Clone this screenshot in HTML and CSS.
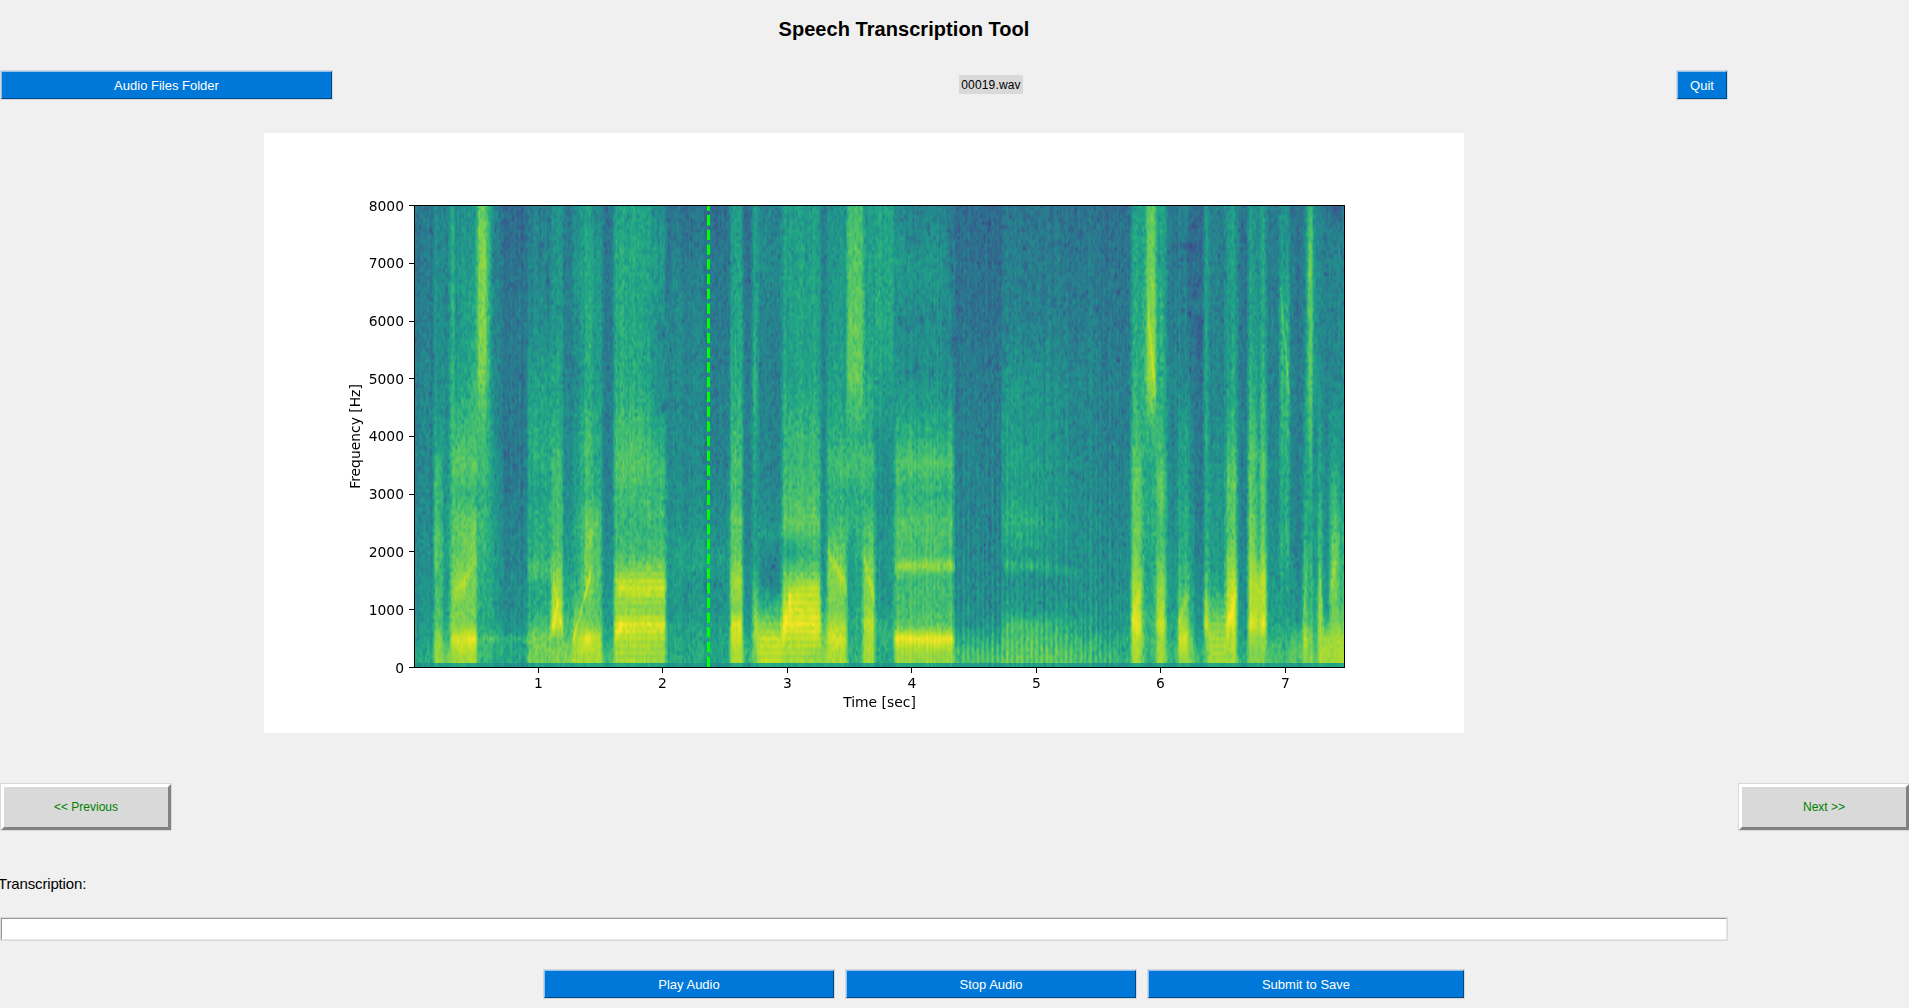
FILE: index.html
```html
<!DOCTYPE html>
<html lang="en">
<head>
<meta charset="utf-8">
<title>Speech Transcription Tool</title>
<link rel="stylesheet" href="styles.css">
</head>
<body>
<main class="app">
  <h1 class="title">Speech Transcription Tool</h1>
  <div class="toolbar">
    <button class="btn folder">Audio Files Folder</button>
    <span class="filename">00019.wav</span>
    <button class="btn quit">Quit</button>
  </div>
  <section class="figure">
    <canvas id="spec" class="spec" width="931" height="463"></canvas>
    <svg class="axes" width="1200" height="600" viewBox="0 0 1200 600">
      <line class="cursor" x1="444.5" y1="534" x2="444.5" y2="73"/>
      <rect class="frame" x="150.5" y="72.5" width="930" height="462"/>
      <path class="ticks" d="M145 534.5h5M145 476.5h5M145 418.5h5M145 361.5h5M145 303.5h5M145 245.5h5M145 188.5h5M145 130.5h5M145 72.5h5M274.5 535v5M398.5 535v5M523.5 535v5M647.5 535v5M772.5 535v5M896.5 535v5M1021.5 535v5"/>
      <g class="ylab">
        <text x="140" y="540">0</text><text x="140" y="482">1000</text><text x="140" y="424">2000</text>
        <text x="140" y="366">3000</text><text x="140" y="308">4000</text><text x="140" y="251">5000</text>
        <text x="140" y="193">6000</text><text x="140" y="135">7000</text><text x="140" y="78">8000</text>
      </g>
      <g class="xlab">
        <text x="274.5" y="555">1</text><text x="398.5" y="555">2</text><text x="523.5" y="555">3</text>
        <text x="648" y="555">4</text><text x="772.5" y="555">5</text><text x="896.5" y="555">6</text>
        <text x="1021.5" y="555">7</text><text x="615.5" y="574">Time [sec]</text>
        <text transform="translate(96 303.5) rotate(-90)">Frequency [Hz]</text>
      </g>
    </svg>
  </section>
  <div class="nav">
    <button class="step">&lt;&lt; Previous</button>
    <button class="step">Next &gt;&gt;</button>
  </div>
  <label class="label" for="entry">Transcription:</label>
  <input class="entry" id="entry" type="text">
  <div class="actions">
    <button class="btn">Play Audio</button>
    <button class="btn">Stop Audio</button>
    <button class="btn submit">Submit to Save</button>
  </div>
</main>
<script src="spectrogram.js"></script>
</body>
</html>
```
FILE: styles.css
```css
* { box-sizing: border-box; }
body {
  margin: 0;
  background: #f0f0f0;
  color: #000;
  font-family: "Liberation Sans", Arial, sans-serif;
  overflow: hidden;
}
.app { display: flex; flex-direction: column; width: 1910px; height: 1008px; }
.title {
  margin: 0;
  width: 1808px;
  height: 70px;
  padding-top: 17px;
  text-align: center;
  font-size: 20px;
  line-height: 24px;
  font-weight: bold;
  letter-spacing: 0.05px;
}
.toolbar { display: flex; align-items: flex-start; height: 63px; }
button { padding: 0; border-radius: 0; font-family: inherit; }
.btn {
  height: 28px;
  margin: 1px;
  padding-top: 1px;
  background: #0078d9;
  color: #fff;
  border: 1px solid;
  border-color: #8fc1f2 #004880 #004880 #8fc1f2;
  outline: 1px solid #d4d6d9;
  font-size: 13px;
  line-height: 24px;
}
.folder { width: 331px; }
.filename {
  width: 64px;
  height: 19px;
  margin: 5px 653px 0 626px;
  background: #d9d9d9;
  font-size: 12px;
  line-height: 20px;
  letter-spacing: 0.15px;
  text-align: center;
}
.quit { width: 50px; }
.figure {
  position: relative;
  width: 1200px;
  height: 600px;
  margin-left: 264px;
  padding: 72px 0 0 150px;
  background: #fff;
}
.spec { display: block; }
.axes { position: absolute; inset: 0; font: 13.89px "DejaVu Sans", sans-serif; }
.frame, .ticks { fill: none; stroke: #000; stroke-width: 1; }
.cursor { stroke: #0f0; stroke-width: 3; stroke-dasharray: 10.28 4.44; }
.ylab { text-anchor: end; }
.xlab { text-anchor: middle; }
.nav { display: flex; justify-content: space-between; margin-top: 50px; }
.step {
  width: 170px;
  height: 46px;
  margin: 1px;
  background: #d9d9d9;
  color: #008000;
  border: 3px solid;
  border-color: #fff #828282 #828282 #fff;
  outline: 1px solid #d9d9d9;
  font-size: 12px;
}
.label { margin: 43px 0 0 -2px; height: 20px; font-size: 15px; line-height: 20px; letter-spacing: -0.15px; }
.entry {
  width: 1726px;
  height: 22px;
  margin: 24px 1px 1px;
  padding: 0 2px;
  border: 1px solid;
  border-color: #999 #e6e6e6 #e6e6e6 #999;
  border-radius: 0;
  outline: 1px solid #d9d9d9;
  background: #fff;
}
.actions { display: grid; grid-template-columns: 292px 292px 318px; column-gap: 10px; margin: 28px 0 0 543px; }
```
FILE: spectrogram.js
```javascript
(function () {
  var W = 931, H = 463;
  var canvas = document.getElementById('spec');
  var ctx = canvas.getContext('2d');

  // Viridis control points
  var MAP = [[68,1,84],[72,36,117],[65,68,135],[53,95,141],[42,120,142],[33,145,140],
             [34,168,132],[68,191,112],[122,209,81],[189,223,38],[253,231,37]];
  // Frequencies (kHz) at which the levels of each span are given
  var F = [8, 7, 6, 5, 4, 3.5, 3, 2.5, 2, 1.5, 1, 0.75, 0.5, 0.2];
  // Spans: start, end (px), levels in percent from 8 kHz down to 200 Hz
  var S = [
    [0,20, '40 40 41 44 45 45 45 47 48 48 50 52 55 60'],
    [20,28,'46 49 51 50 57 68 68 71 76 70 72 76 85 85'],
    [28,36,'46 46 47 49 51 53 54 56 57 56 58 60 68 78'],
    [36,40,'62 65 64 66 70 72 70 72 74 80 80 84 90 84'],
    [40,52,'48 52 52 56 68 74 66 76 73 84 79 81 93 86'],
    [52,63,'52 56 59 64 70 76 66 78 79 80 78 81 98 87'],
    [63,75,'76 79 80 77 66 67 62 64 62 60 60 60 66 66'],
    [75,85,'46 44 45 46 50 52 53 54 54 55 55 56 63 60'],
    [85,113,'34 38 40 40 40 40 43 44 45 47 49 51 58 60'],
    [113,137,'42 45 47 56 60 60 56 61 62 58 61 68 80 77'],
    [137,149,'50 53 54 58 62 69 68 69 72 84 87 93 78 79'],
    [149,158,'40 40 42 44 46 46 48 48 52 56 62 66 73 80'],
    [158,168,'46 52 48 46 52 54 54 60 58 62 73 79 86 86'],
    [168,179,'57 60 61 60 70 70 66 77 76 80 77 80 96 87'],
    [179,188,'46 52 54 54 58 60 60 70 72 72 72 76 88 86'],
    [188,200,'38 40 40 41 42 43 44 45 46 50 54 55 58 70'],
    [200,236,'56 59 59 60 68 72 68 65 68 86 82 92 86 85'],
    [236,252,'48 54 50 48 60 67 66 66 70 86 82 92 85 84'],
    [252,290,'37 42 45 46 46 46 49 51 55 52 52 56 58 60'],
    [290,316,'35 39 41 42 43 44 46 48 52 50 52 54 58 58'],
    [316,329,'54 56 58 61 66 70 68 76 74 86 80 95 91 87'],
    [329,339,'35 38 40 42 44 43 44 45 46 49 50 53 60 66'],
    [339,344,'58 58 60 66 60 56 56 56 58 68 80 88 84 80'],
    [344,368,'43 47 44 43 44 44 46 50 50 52 66 80 90 89'],
    [368,407,'56 57 58 58 66 67 70 75 66 80 92 96 90 85'],
    [407,413,'39 39 40 41 43 44 45 45 46 50 58 68 76 82'],
    [413,433,'50 53 54 57 62 70 62 68 76 82 79 87 93 87'],
    [433,449,'68 73 75 76 63 69 60 63 61 58 60 62 62 66'],
    [449,461,'53 56 57 59 60 70 61 69 74 82 82 90 86 86'],
    [461,480,'57 59 60 56 50 49 48 51 52 52 54 61 63 60'],
    [480,540,'44 52 48 50 62 72 63 72 70 69 70 74 93 84'],
    [540,588,'35 37 38 41 43 44 44 45 46 47 49 51 62 71'],
    [588,632,'38 42 43 52 54 57 56 63 55 50 54 69 71 75'],
    [632,666,'37 41 42 48 49 50 50 52 50 49 53 62 67 73'],
    [666,700,'37 40 42 44 44 46 47 48 49 50 52 53 61 68'],
    [700,717,'35 38 39 41 42 43 44 45 47 49 51 53 59 61'],
    [717,728,'57 59 60 63 68 73 77 76 76 85 89 95 89 86'],
    [728,732,'54 58 60 63 60 60 60 60 60 62 66 70 72 70'],
    [732,742,'75 78 82 85 65 61 60 62 59 60 63 65 67 65'],
    [742,752,'58 60 62 64 68 73 76 71 73 83 87 93 86 86'],
    [752,764,'39 41 41 46 46 47 48 49 50 54 56 60 60 68'],
    [764,774,'44 43 45 47 58 57 58 62 62 69 77 85 94 85'],
    [774,780,'39 36 39 43 50 50 51 55 55 60 65 68 78 80'],
    [780,790,'33 37 39 39 40 41 42 43 44 48 50 52 56 66'],
    [790,794,'52 54 57 57 60 56 57 60 62 70 88 94 78 70'],
    [794,812,'43 44 45 46 48 51 53 54 54 58 72 81 85 86'],
    [812,823,'52 55 55 57 64 73 74 74 78 88 92 93 88 85'],
    [823,834,'38 39 40 41 43 45 45 46 47 49 51 53 58 64'],
    [834,842,'52 54 56 62 70 76 73 77 81 89 87 96 84 80'],
    [842,846,'46 47 50 51 57 60 61 62 66 86 87 86 82 80'],
    [846,853,'54 57 56 64 68 73 72 73 77 90 88 95 84 80'],
    [853,866,'39 40 42 42 44 45 45 47 50 52 53 56 61 70'],
    [866,876,'50 54 63 66 64 61 61 61 62 57 55 57 62 67'],
    [876,889,'38 41 41 43 43 44 45 45 46 50 52 58 70 75'],
    [889,893,'46 47 48 51 56 60 60 63 70 73 78 82 94 84'],
    [893,899,'66 77 73 74 72 63 61 60 62 64 66 70 78 80'],
    [899,904,'44 50 52 52 47 47 50 52 52 54 58 60 66 74'],
    [904,908,'42 44 46 48 55 60 60 67 71 79 87 86 86 86'],
    [908,916,'42 43 44 46 47 48 49 50 50 52 56 70 85 87'],
    [916,924,'46 47 47 49 56 60 70 73 77 82 79 82 87 87'],
    [924,931,'39 43 45 47 48 50 53 60 62 64 70 76 86 87']
  ].map(function (s) { return [s[0], s[1], s[2].split(' ').map(Number)]; });
  // Boundaries that fade gradually: px position to fade length
  var SOFT = { 36: 2, 52: 4, 75: 4, 85: 5, 168: 4, 179: 4, 236: 8, 252: 2, 290: 12, 632: 16, 666: 16, 700: 10, 588: 3 };

  // Formant ridges: x0, kHz0, x1, kHz1, half width (px), gain
  var R = [
    [40,1.3,50,1.4,9,4],[50,1.5,62,1.9,8,5],[113,1.7,137,1.65,10,9],[135,0.4,143,1.1,9,6],[140,1.4,149,0.5,8,5],
    [159,0.5,176,1.6,5,11],[170,1.9,183,2.6,10,5],[200,0.5,207,0.75,6,7],[204,1.35,252,1.35,9,6],
    [204,0.65,250,0.65,9,3],[368,0.5,376,1.2,12,4],[374,1.2,405,1.4,12,6],[414,2.0,432,1.4,8,8],
    [449,1.9,460,1.2,8,6],[481,1.76,540,1.76,7,13],[481,3.45,540,3.45,6,1],[481,0.5,540,0.5,6,4],
    [590,1.76,634,1.74,6,11],[634,1.74,665,1.6,6,7],[344,2.3,368,2.3,4,5],[717,0.8,728,1.5,12,4],[734,6,741,4.8,14,7],
    [764,0.8,774,1.3,8,6],[812,0.6,823,1.4,10,6],[866,6.5,876,4.5,12,8],[889,0.9,894,2,9,6],
    [904,1.9,908,1,9,5],[915,1.2,924,2.2,10,5],[265,1.7,310,1.9,10,4],[75,0.5,113,0.5,4,5]
  ];
  // Quiet pockets: x, kHz, radius x, radius y, depth
  var D = [
    [248,5.8,3,8,15],[249,4.5,3,8,16],[252,6.8,2,30,8],[133,6.7,2,6,13],[126,7.3,4,3,12],[143,6.2,2,6,12],
    [487,6,3,5,10],[496,5.9,3,5,10],[508,6,3,5,12],[519,6.15,3,6,10],[502,5.2,3,6,13],[493,5.1,3,4,9],
    [517,5.1,3,4,12],[536,7.1,2,42,15],[514,7.6,2,6,14],[498,7.4,4,5,8],
    [538,5.6,3,16,12],[772,7.3,12,4,11],[774,6.6,2,60,7],[921,7.9,7,10,13],
    [785,5.8,4,18,9],[355,1.6,10,22,9],[375,2,12,12,8],[436,1.7,5,40,6]
  ];

  var seed = 20311;
  function rnd() { seed = (seed * 1664525 + 1013904223) >>> 0; return seed / 4294967296; }
  // Log-power noise on the transform grid, skewed towards quiet values
  var GC = 620, GR = 130, grid = new Float32Array(GC * GR), stripe = new Float32Array(GC);
  for (var i = 0; i < grid.length; i++) {
    var e = -Math.log(1 - rnd() * 0.9999) - Math.log(1 - rnd() * 0.9999);
    grid[i] = Math.max(-18, Math.log(e / 2 + 0.02) * 6 + 1.6);
  }
  for (i = 0; i < GC; i++) stripe[i] = (rnd() - 0.5) * 7;

  function levelAt(s, k) {
    if (k <= F[F.length - 1]) return s[F.length - 1];
    for (var j = 1; j < F.length; j++) {
      if (k >= F[j]) return s[j] + (s[j - 1] - s[j]) * (k - F[j]) / (F[j - 1] - F[j]);
    }
    return s[0];
  }
  var tables = S.map(function (s) {
    var t = new Float32Array(H);
    for (var y = 0; y < H; y++) t[y] = levelAt(s[2], (H - 1 - y) / 57.75);
    return t;
  });
  var img = ctx.createImageData(W, H), cur = 0;
  for (var x = 0; x < W; x++) {
    while (cur < S.length - 1 && x >= S[cur][1]) cur++;
    // Blend near the edges of a span
    var side = cur, wgt = 0;
    var lw = SOFT[S[cur][0]] || 2, rw = SOFT[S[cur][1]] || 2;
    var ld = x + 0.5 - S[cur][0], rd = S[cur][1] - x - 0.5;
    if (ld < lw && cur > 0) { side = cur - 1; wgt = 0.5 * (1 - ld / lw); }
    else if (rd < rw && cur < S.length - 1) { side = cur + 1; wgt = 0.5 * (1 - rd / rw); }
    var gx = x / 1.62, c0 = Math.floor(gx), fx = gx - c0;
    var voiced = (x > 200 && x < 252) || (x > 368 && x < 407) || (x > 344 && x < 368) || (x > 797 && x < 812);
    var pulses = x > 480 && x < 700 ? (x < 540 ? 1.5 : 5) : 0;
    for (var y = 0; y < H; y++) {
      var k = (H - 1 - y) / 57.75;
      var v = tables[cur][y] * (1 - wgt) + tables[side][y] * wgt;
      var base = v;
      for (var r = 0; r < R.length; r++) {
        var q = R[r];
        if (x < q[0] || x > q[2]) continue;
        var fy = q[1] + (q[3] - q[1]) * (x - q[0]) / (q[2] - q[0]);
        var d = (k - fy) * 57.75 / q[4];
        if (d > -3 && d < 3) v += q[5] * Math.exp(-d * d);
      }
      for (r = 0; r < D.length; r++) {
        q = D[r];
        var dx = (x - q[0]) / q[2], dy = (k - q[1]) * 57.75 / q[3], dd = dx * dx + dy * dy;
        if (dd < 6) v -= q[4] * Math.exp(-dd);
      }
      if (voiced && k < 1.7) v += 1.3 * Math.cos(k * 2 * Math.PI / 0.125);
      if (pulses && k < 5) v += pulses * (1 - k / 6) * Math.cos(x * 2 * Math.PI / (x < 540 ? 4.1 : 4.9));
      var gy = y / 3.61, r0 = Math.floor(gy), fr = gy - r0;
      var a = grid[r0 * GC + c0] * (1 - fx) + grid[r0 * GC + c0 + 1] * fx;
      var b = grid[(r0 + 1) * GC + c0] * (1 - fx) + grid[(r0 + 1) * GC + c0 + 1] * fx;
      var amp = base > 80 ? 0.4 : base > 66 ? 0.75 : 1;
      v += (a * (1 - fr) + b * fr) * amp + (stripe[c0] * (1 - fx) + stripe[c0 + 1] * fx) * amp;
      if (y > H - 6) v = v * 0.35 + 30 + stripe[c0];
      v = Math.max(8, Math.min(99.5, v)) / 10;
      var m = Math.floor(v), f = v - m, p = (y * W + x) * 4;
      for (var c = 0; c < 3; c++) img.data[p + c] = MAP[m][c] + (MAP[m + 1][c] - MAP[m][c]) * f;
      img.data[p + 3] = 255;
    }
  }
  ctx.putImageData(img, 0, 0);
})();
```
